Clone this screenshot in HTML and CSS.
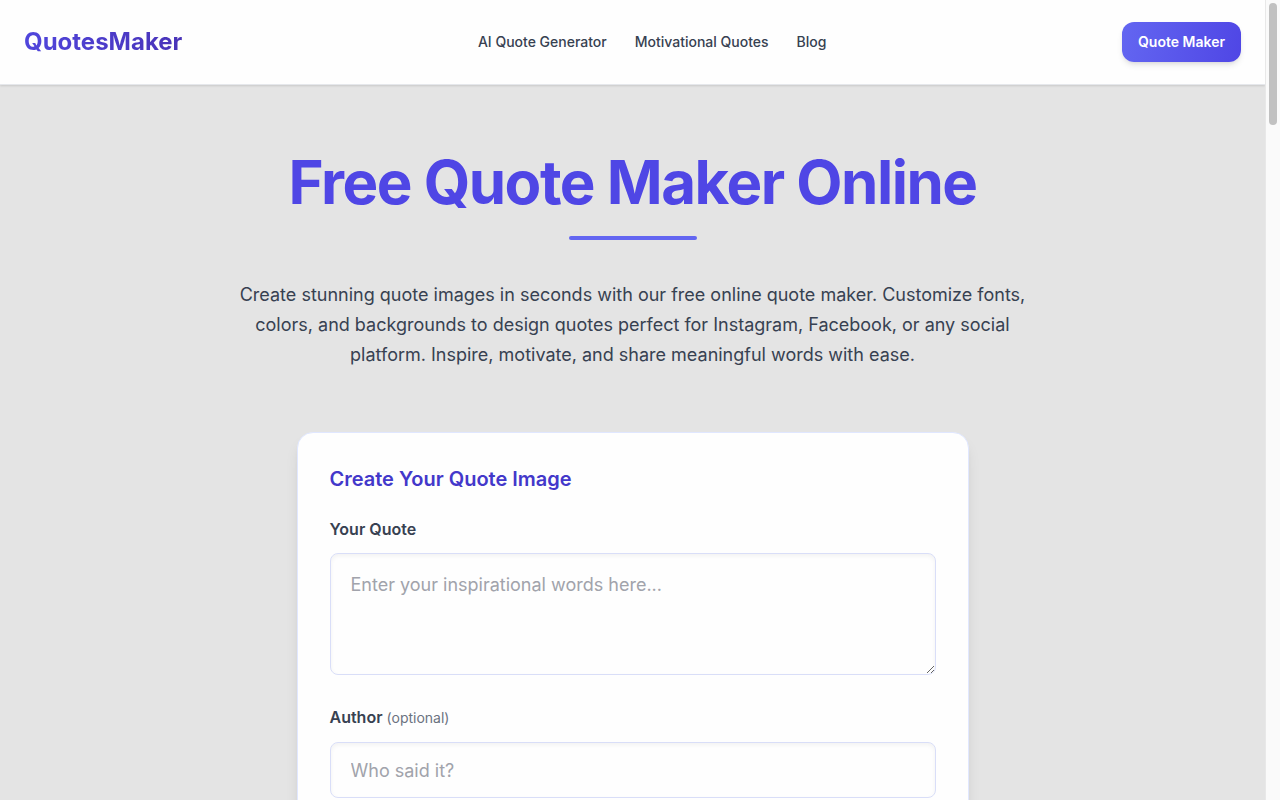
FILE: index.html
```html
<!DOCTYPE html>
<html lang="en">
<head>
<meta charset="utf-8">
<meta name="viewport" content="width=device-width, initial-scale=1">
<title>Free Quote Maker Online</title>
<link rel="stylesheet" href="styles.css">
</head>
<body>
<div class="shell">
  <div class="page">
    <header class="header">
      <a class="logo" href="#">QuotesMaker</a>
      <nav class="nav">
        <a href="#">AI Quote Generator</a>
        <a href="#">Motivational Quotes</a>
        <a href="#">Blog</a>
      </nav>
      <a class="cta" href="#maker">Quote Maker</a>
    </header>
    <main class="main">
      <section class="hero">
        <h1 class="title">Free Quote Maker Online</h1>
        <div class="rule"></div>
        <p class="lead">Create stunning quote images in seconds with our free online quote maker. Customize fonts, colors, and backgrounds to design quotes perfect for Instagram, Facebook, or any social platform. Inspire, motivate, and share meaningful words with ease.</p>
      </section>
      <form class="card" id="maker">
        <h2 class="card-title">Create Your Quote Image</h2>
        <div class="field">
          <label class="label" for="quote">Your Quote</label>
          <textarea class="control area" id="quote" placeholder="Enter your inspirational words here..."></textarea>
        </div>
        <div class="field">
          <label class="label" for="author">Author <span class="hint">(optional)</span></label>
          <input class="control" id="author" type="text" placeholder="Who said it?">
        </div>
      </form>
    </main>
  </div>
  <div class="scrollbar" aria-hidden="true"><div class="thumb"></div></div>
</div>
</body>
</html>
```
FILE: styles.css
```css
* {
  box-sizing: border-box;
}

body {
  margin: 0;
  font-family: Inter, "Liberation Sans", sans-serif;
  line-height: 24px;
  color: #374151;
  background: #e4e4e4;
}

a {
  color: inherit;
  text-decoration: none;
}

.shell {
  display: flex;
  height: 100vh;
  overflow: hidden;
}

.page {
  flex: 1;
  min-width: 0;
}

.header {
  display: flex;
  align-items: center;
  justify-content: space-between;
  padding: 22px 24px;
  background: #fefefe;
  border-bottom: 1px solid #e5e7eb;
  box-shadow: 0 1px 2px rgba(0, 0, 0, 0.12);
}

.logo {
  font-size: 24px;
  font-weight: 700;
  line-height: 32px;
  color: transparent;
  background: linear-gradient(90deg, #5046dc, #4933b8);
  -webkit-background-clip: text;
  background-clip: text;
}

.nav {
  display: flex;
  gap: 28px;
  font-size: 14px;
  font-weight: 500;
  line-height: 20px;
}

.cta {
  padding: 10px 16px;
  border-radius: 12px;
  font-size: 14px;
  font-weight: 600;
  line-height: 20px;
  color: #fff;
  background: linear-gradient(100deg, #6366f1, #4f46e5);
  box-shadow: 0 4px 6px -1px rgba(0, 0, 0, 0.1), 0 2px 4px -2px rgba(0, 0, 0, 0.1);
}

.main {
  padding: 64px 24px;
}

.hero {
  display: flex;
  flex-direction: column;
  align-items: center;
  text-align: center;
}

.title {
  margin: 0;
  font-size: 60px;
  font-weight: 700;
  line-height: 67px;
  letter-spacing: -0.025em;
  color: #4f46e5;
}

.rule {
  width: 128px;
  height: 4px;
  margin-top: 20px;
  border-radius: 2px;
  background: #6366f1;
}

.lead {
  max-width: 800px;
  margin: 40px 0 62px;
  font-size: 18px;
  line-height: 30px;
}

.card {
  display: flex;
  flex-direction: column;
  gap: 24px;
  max-width: 672px;
  margin: 0 auto;
  padding: 32px;
  border: 1px solid #e0e7ff;
  border-radius: 16px;
  background: #fefefe;
  box-shadow: 0 10px 15px -3px rgba(0, 0, 0, 0.1), 0 4px 6px -4px rgba(0, 0, 0, 0.1);
}

.card-title {
  margin: 0;
  font-size: 20px;
  font-weight: 600;
  line-height: 28px;
  color: #4338ca;
}

.field {
  display: flex;
  flex-direction: column;
  gap: 12px;
}

.label {
  font-size: 16px;
  font-weight: 600;
}

.hint {
  font-size: 14px;
  font-weight: 400;
  color: #6b7280;
}

.control {
  width: 100%;
  height: 56px;
  padding: 12px 20px;
  border: 1px solid #d9def8;
  border-radius: 8px;
  font: inherit;
  font-size: 18px;
  line-height: 30px;
  color: #374151;
  background: #fefefe;
  box-shadow: inset 0 2px 4px rgba(0, 0, 0, 0.05);
}

.control::placeholder {
  color: #a1a3ab;
}

.area {
  height: 122px;
  margin-bottom: 6px;
  padding: 16px 20px;
  resize: vertical;
}

.scrollbar {
  width: 15px;
  padding: 3px;
  border-left: 1px solid #e8e8e8;
  background: #fafafa;
}

.thumb {
  width: 8px;
  height: 122px;
  border-radius: 4px;
  background: #c1c1c1;
}
```
